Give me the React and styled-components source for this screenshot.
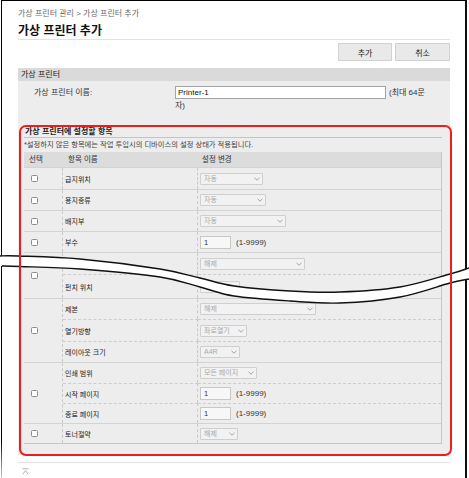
import styled, { createGlobalStyle } from "styled-components";

const GlobalStyle = createGlobalStyle`
  html, body {
    margin: 0;
    padding: 0;
    background: #fff;
  }
  body {
    font-family: "Liberation Sans", "Noto Sans CJK KR", sans-serif;
    color: #222;
  }
`;

const items = [
  { heights: [21], subs: [{ name: "급지위치", field: { kind: "select", text: "자동", width: 63 } }] },
  { heights: [20], subs: [{ name: "용지종류", field: { kind: "select", text: "자동", width: 66 } }] },
  { heights: [20], subs: [{ name: "배지부", field: { kind: "select", text: "자동", width: 86 } }] },
  { heights: [20], subs: [{ name: "부수", field: { kind: "number", value: "1" } }] },
  {
    heights: [21, 24],
    subs: [
      { name: "펀치", field: { kind: "select", text: "해제", width: 105 } },
      { name: "펀치 위치", field: { kind: "select", text: "해제", width: 40 } },
    ],
  },
  {
    heights: [20, 22, 21],
    subs: [
      { name: "제본", field: { kind: "select", text: "해제", width: 116 } },
      { name: "열기방향", field: { kind: "select", text: "좌로열기", width: 47 } },
      { name: "레이아웃 크기", field: { kind: "select", text: "A4R", width: 40 } },
    ],
  },
  {
    heights: [20, 20, 20],
    subs: [
      { name: "인쇄 범위", field: { kind: "select", text: "모든 페이지", width: 57 } },
      { name: "시작 페이지", field: { kind: "number", value: "1" } },
      { name: "종료 페이지", field: { kind: "number", value: "1" } },
    ],
  },
  { heights: [19], subs: [{ name: "토너절약", field: { kind: "select", text: "해제", width: 38 } }] },
];

// torn-edge curves
const upper = [[0, 256], [18, 256], [80, 259], [160, 269], [200, 278], [234, 286], [290, 291], [340, 292], [400, 287], [450, 274], [469, 268]];
const lower = [[2, 266], [20, 266.5], [80, 269], [160, 277], [200, 287], [234, 296], [290, 301], [340, 303], [400, 297], [450, 283], [469, 279]];

const curve = pts => {
  let d = "";
  for (let i = 0; i < pts.length - 1; i++) {
    const p0 = pts[i - 1] || pts[i];
    const p1 = pts[i];
    const p2 = pts[i + 1];
    const p3 = pts[i + 2] || p2;
    const c1 = [p1[0] + (p2[0] - p0[0]) / 6, p1[1] + (p2[1] - p0[1]) / 6];
    const c2 = [p2[0] - (p3[0] - p1[0]) / 6, p2[1] - (p3[1] - p1[1]) / 6];
    d += ` C${c1[0]},${c1[1]} ${c2[0]},${c2[1]} ${p2[0]},${p2[1]}`;
  }
  return d;
};

const upperD = `M${upper[0]}` + curve(upper);
const lowerD = `M${lower[0]}` + curve(lower);
const lowerRev = [...lower].reverse();
const fillD = `M${upper[0]}` + curve(upper) + ` L${lowerRev[0]}` + curve(lowerRev) + " L0,266 Z";

const Chevron = () => (
  <svg width="6" height="4" viewBox="0 0 6 4">
    <path d="M0.5 0.8 L3 3.2 L5.5 0.8" fill="none" stroke="#9a9a9a" strokeWidth="0.9" />
  </svg>
);

const Field = ({ field }) => {
  if (field.kind === "number") {
    return (
      <>
        <NumInput>{field.value}</NumInput>
        <Range>(1-9999)</Range>
      </>
    );
  }
  return (
    <Select $w={field.width}>
      <span>{field.text}</span>
      <Chevron />
    </Select>
  );
};

const App = () => {
  return (
    <Page>
      <GlobalStyle />
      <Frame>
        <Breadcrumb>가상 프린터 관리 &gt; 가상 프린터 추가</Breadcrumb>
        <Title>가상 프린터 추가</Title>
        <ButtonBar>
          <Button $w={54}>추가</Button>
          <Button $w={55}>취소</Button>
        </ButtonBar>

        <Panel>
          <PanelHeader>가상 프린터</PanelHeader>
          <PanelBody>
            <FieldRow>
              <FieldLabel>가상 프린터 이름:</FieldLabel>
              <FieldValue>
                <InputLine>
                  <TextInput>Printer-1</TextInput>
                  <Hint>(최대 64문</Hint>
                </InputLine>
                <HintWrap>자)</HintWrap>
              </FieldValue>
            </FieldRow>

            <Subsection>
              <SubTitle>가상 프린터에 설정할 항목</SubTitle>
              <Note>*설정하지 않은 항목에는 작업 투입시의 디바이스의 설정 상태가 적용됩니다.</Note>
              <Table>
                <HeadRow>
                  <HeadCell $pad={5}>선택</HeadCell>
                  <HeadCell $pad={5}>항목 이름</HeadCell>
                  <HeadCell $pad={4}>설정 변경</HeadCell>
                </HeadRow>
                {items.map((item, i) => (
                  <Row key={i} $heights={item.heights}>
                    <CheckCell>
                      <Checkbox />
                    </CheckCell>
                    {item.subs.map((sub, j) => [
                      <NameCell key={`n${j}`} $dashed={j > 0}>
                        {sub.name}
                      </NameCell>,
                      <ValueCell key={`v${j}`} $dashed={j > 0}>
                        <Field field={sub.field} />
                      </ValueCell>,
                    ])}
                  </Row>
                ))}
              </Table>
            </Subsection>
          </PanelBody>
        </Panel>

        <Footer>
          <svg width="7" height="7" viewBox="0 0 7 7">
            <path d="M0.5 0.8 H6.5 M1 6.2 L3.5 2.6 L6 6.2" fill="none" stroke="#a8a8a8" strokeWidth="0.9" />
          </svg>
        </Footer>
      </Frame>

      <Tear width="469" height="80" viewBox="0 240 469 80">
        <path d={fillD} fill="#fff" />
        <path d={upperD} fill="none" stroke="#111" strokeWidth="1.4" />
        <path d={lowerD} fill="none" stroke="#111" strokeWidth="1.4" />
      </Tear>
    </Page>
  );
};

export default App;

/* ---------------------------- Styled Components --------------------------- */

const Page = styled.div`
  position: relative;
  width: 469px;
  height: 478px;
  overflow: hidden;
`;

const Frame = styled.div`
  margin-left: 1px;
  width: 466px;
  height: 478px;
  box-sizing: border-box;
  border-top: 1px solid #000;
  border-right: 2px solid #111;
  padding: 0 15px 0 17px;
  /* left edge fades out toward the bottom */
  background: linear-gradient(to bottom, #000 0, #000 440px, #d4d4d4 478px) left top / 1px 100% no-repeat;
`;

const Breadcrumb = styled.div`
  margin-top: 8px;
  font-size: 8px;
  line-height: 10px;
  color: #6a6a6a;
`;

const Title = styled.h1`
  margin: 5px 0 0;
  font-size: 12px;
  line-height: 15px;
  font-weight: bold;
  color: #111;
  border-bottom: 1px solid #e2e2e2;
`;

const ButtonBar = styled.div`
  display: flex;
  justify-content: flex-end;
  gap: 3px;
  margin-top: 3px;
`;

const Button = styled.button`
  width: ${props => props.$w}px;
  height: 18px;
  box-sizing: border-box;
  border: 1px solid #d2d2d2;
  background: #e9e9e9;
  font-family: inherit;
  font-size: 8px;
  color: #222;
  padding: 0;
  cursor: pointer;
`;

const Panel = styled.section`
  margin-top: 7px;
  background: #ededed;
`;

const PanelHeader = styled.div`
  height: 13px;
  line-height: 13px;
  padding-left: 3px;
  background: #dadada;
  font-size: 8px;
  color: #222;
`;

const PanelBody = styled.div`
  padding: 5px 0 11px;
`;

const FieldRow = styled.div`
  display: flex;
`;

const FieldLabel = styled.div`
  width: 157px;
  box-sizing: border-box;
  padding-left: 16px;
  font-size: 8px;
  line-height: 13px;
  color: #333;
`;

const FieldValue = styled.div`
  flex: 1;
  font-size: 8px;
  color: #333;
`;

const InputLine = styled.div`
  display: flex;
  align-items: center;
  gap: 3px;
`;

const TextInput = styled.div`
  width: 211px;
  height: 13px;
  box-sizing: border-box;
  border: 1px solid #a4a4a4;
  background: #fff;
  padding-left: 2px;
  font-size: 8px;
  line-height: 11px;
  color: #111;
`;

const Hint = styled.span`
  line-height: 13px;
  white-space: nowrap;
`;

const HintWrap = styled.div`
  line-height: 14px;
`;

const Subsection = styled.div`
  position: relative;
  margin: 14px 8px 0 6px;

  &::after {
    content: "";
    position: absolute;
    top: -2px;
    left: -5px;
    right: -10px;
    bottom: -12px;
    border: 2px solid #ee1c1c;
    border-radius: 7px;
    z-index: 2;
    pointer-events: none;
  }
`;

const SubTitle = styled.div`
  font-size: 8px;
  font-weight: 600;
  line-height: 10px;
  padding-left: 1px;
  color: #222;
  border-bottom: 1px solid #c4c4c4;
`;

const Note = styled.div`
  margin-top: 2px;
  font-size: 7.3px;
  line-height: 9px;
  color: #444;
  white-space: nowrap;
`;

const Table = styled.div`
  margin-top: 3px;
  border-right: 1px solid #c6c6c6;
  border-bottom: 1px solid #c6c6c6;
`;

const HeadRow = styled.div`
  display: grid;
  grid-template-columns: 39px 135px 1fr;
  height: 15px;
  background: #dcdcdc;
`;

const HeadCell = styled.div`
  padding-left: ${props => props.$pad}px;
  font-size: 7.5px;
  line-height: 15px;
  color: #333;
`;

const Row = styled.div`
  display: grid;
  grid-template-columns: 39px 135px 1fr;
  grid-template-rows: ${props => props.$heights.map(h => `${h}px`).join(" ")};
  border-top: 1px solid #d3d3d3;
`;

const CheckCell = styled.div`
  grid-column: 1;
  grid-row: 1 / -1;
  display: flex;
  align-items: center;
  padding-left: 7px;
  border-right: 1px dashed #c8c8c8;
`;

const Checkbox = styled.span`
  width: 7px;
  height: 7px;
  box-sizing: border-box;
  border: 1px solid #8c8c8c;
  border-radius: 1.5px;
  background: #fff;
`;

const NameCell = styled.div`
  grid-column: 2;
  display: flex;
  align-items: center;
  padding-left: 2px;
  box-sizing: border-box;
  font-size: 7px;
  color: #222;
  white-space: nowrap;
  border-right: 1px dashed #c8c8c8;
  border-top: ${props => (props.$dashed ? "1px dashed #cdcdcd" : "none")};
`;

const ValueCell = styled.div`
  grid-column: 3;
  display: flex;
  align-items: center;
  padding-left: 2px;
  box-sizing: border-box;
  border-top: ${props => (props.$dashed ? "1px dashed #cdcdcd" : "none")};
`;

const Select = styled.div`
  display: flex;
  align-items: center;
  width: ${props => props.$w}px;
  height: 12px;
  box-sizing: border-box;
  border: 1px solid #cfcfcf;
  border-radius: 1px;
  background: #f2f2f2;
  padding: 0 2px 0 3px;
  font-size: 7px;
  color: #a9a9a9;

  span {
    flex: 1;
    overflow: hidden;
    white-space: nowrap;
    line-height: 10px;
  }

  svg {
    flex: none;
    margin-left: 1px;
  }
`;

const NumInput = styled.div`
  width: 31px;
  height: 13px;
  box-sizing: border-box;
  border: 1px solid #c8c8c8;
  background: #f7f7f7;
  padding-left: 3px;
  font-size: 7.5px;
  line-height: 11px;
  color: #333;
`;

const Range = styled.span`
  margin-left: 5px;
  font-size: 8px;
  color: #333;
`;

const Footer = styled.div`
  margin-top: 7px;
  border-top: 1px solid #e4e4e4;
  padding: 5px 0 0 4px;
  line-height: 0;
`;

const Tear = styled.svg`
  position: absolute;
  left: 0;
  top: 240px;
  z-index: 1;
  display: block;
`;
